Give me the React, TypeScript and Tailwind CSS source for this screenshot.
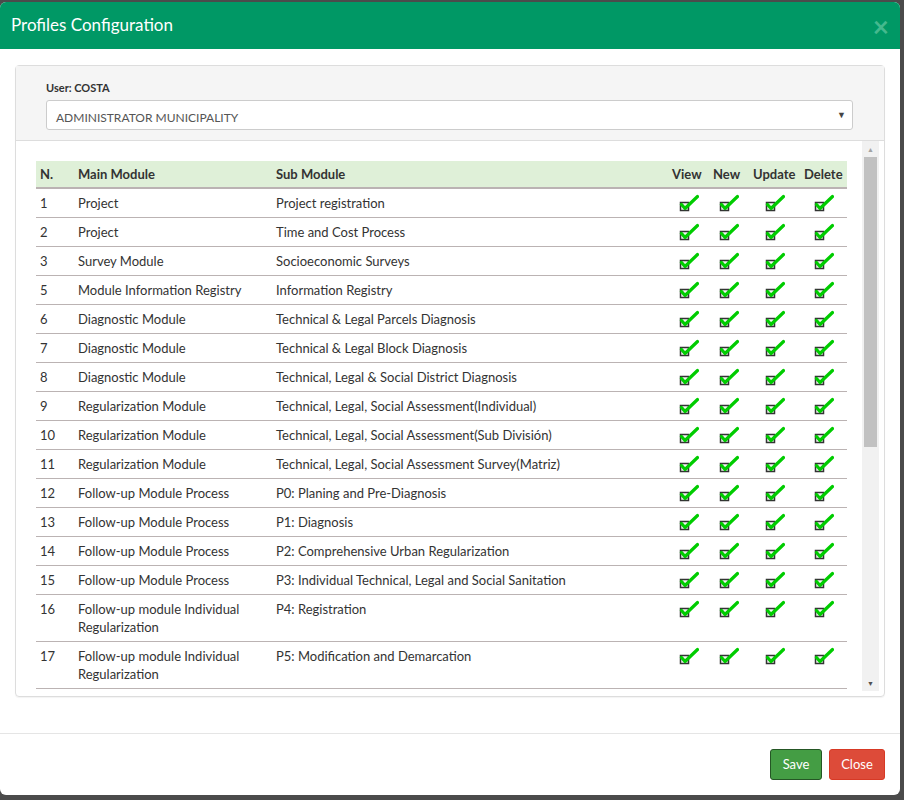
import React from 'react';

const rows = [
  { n: '1', main: 'Project', sub: 'Project registration' },
  { n: '2', main: 'Project', sub: 'Time and Cost Process' },
  { n: '3', main: 'Survey Module', sub: 'Socioeconomic Surveys' },
  { n: '5', main: 'Module Information Registry', sub: 'Information Registry' },
  { n: '6', main: 'Diagnostic Module', sub: 'Technical & Legal Parcels Diagnosis' },
  { n: '7', main: 'Diagnostic Module', sub: 'Technical & Legal Block Diagnosis' },
  { n: '8', main: 'Diagnostic Module', sub: 'Technical, Legal & Social District Diagnosis' },
  { n: '9', main: 'Regularization Module', sub: 'Technical, Legal, Social Assessment(Individual)' },
  { n: '10', main: 'Regularization Module', sub: 'Technical, Legal, Social Assessment(Sub División)' },
  { n: '11', main: 'Regularization Module', sub: 'Technical, Legal, Social Assessment Survey(Matriz)' },
  { n: '12', main: 'Follow-up Module Process', sub: 'P0: Planing and Pre-Diagnosis' },
  { n: '13', main: 'Follow-up Module Process', sub: 'P1: Diagnosis' },
  { n: '14', main: 'Follow-up Module Process', sub: 'P2: Comprehensive Urban Regularization' },
  { n: '15', main: 'Follow-up Module Process', sub: 'P3: Individual Technical, Legal and Social Sanitation' },
  { n: '16', main: 'Follow-up module Individual Regularization', sub: 'P4: Registration' },
  { n: '17', main: 'Follow-up module Individual Regularization', sub: 'P5: Modification and Demarcation' },
];

// checkbox with green tick, like the old "checked" gif
function Tick() {
  return (
    <svg width="20" height="18" viewBox="0 0 20 18" className="block mx-auto">
      <rect x="1.5" y="8.5" width="8" height="8" fill="#f4f4f4" stroke="#333" strokeWidth="1.5" />
      <path d="M2.5 10.5 L6 14.5 L18.5 2.5" fill="none" stroke="#0c0" strokeWidth="3.2" strokeLinecap="round" strokeLinejoin="round" />
    </svg>
  );
}

export default function App() {
  return (
    <div className="w-[904px] h-[800px] bg-[#4b4b4b] pt-[2px] pr-[4px] font-['Lato','Liberation_Sans',sans-serif] text-[#333]">
      <div className="w-[900px] h-[793px] bg-white rounded-[6px] overflow-hidden flex flex-col">
        {/* header */}
        <div className="h-[47px] bg-[#009865] flex items-center justify-between pl-[11px] pr-[11px] pb-[3px]">
          <h4 className="text-white text-[17px] leading-none">Profiles Configuration</h4>
          <span className="text-[#45b98e] text-[28px] font-bold leading-none pt-[3px]">×</span>
        </div>

        {/* body */}
        <div className="flex-1 px-[15px] pt-[16px]">
          <div className="border border-[#ddd] rounded-[4px] shadow-[0_1px_1px_rgba(0,0,0,0.05)]">
            <div className="bg-[#f5f5f5] border-b border-[#ddd] h-[75px] pl-[30px] pr-[31px] pt-[14px]">
              <label className="block text-[11px] font-bold leading-[16px]">User: COSTA</label>
              <div className="mt-[4px] h-[30px] bg-white border border-[#ccc] rounded-[3px] flex items-center justify-between pl-[9px] pr-[6px]">
                <span className="text-[12px] text-[#555] pt-[5px]">ADMINISTRATOR MUNICIPALITY</span>
                <span className="text-[9px] text-[#444]">▼</span>
              </div>
            </div>

            <div className="flex h-[550px]">
              <div className="flex-1 overflow-hidden pl-[20px] pr-[15px] pt-[20px]">
                <table className="w-full table-fixed border-collapse text-[13px]">
                  <colgroup>
                    <col className="w-[38px]" />
                    <col className="w-[198px]" />
                    <col />
                    <col className="w-[41px]" />
                    <col className="w-[40px]" />
                    <col className="w-[51px]" />
                    <col className="w-[47px]" />
                  </colgroup>
                  <thead>
                    <tr className="bg-[#dff0d8] border-b-2 border-[#bbb3b3]">
                      {['N.', 'Main Module', 'Sub Module', 'View', 'New', 'Update', 'Delete'].map((h) => (
                        <th key={h} className="text-left font-bold px-[4px] py-[4px] leading-[18px] whitespace-nowrap">{h}</th>
                      ))}
                    </tr>
                  </thead>
                  <tbody>
                    {rows.map((r) => (
                      <tr key={r.n} className="border-b border-[#bbb3b3] align-top">
                        <td className="px-[4px] py-[5px] leading-[18px]">{r.n}</td>
                        <td className="px-[4px] py-[5px] leading-[18px]">{r.main}</td>
                        <td className="px-[4px] py-[5px] leading-[18px] whitespace-nowrap">{r.sub}</td>
                        {[0, 1, 2, 3].map((i) => (
                          <td key={i} className="py-[5px] leading-[18px]"><Tick /></td>
                        ))}
                      </tr>
                    ))}
                  </tbody>
                </table>
              </div>
              {/* scrollbar */}
              <div className="w-[17px] bg-[#f1f1f1] flex flex-col items-center mr-[5px]">
                <div className="h-[16px] flex items-center justify-center text-[7px] text-[#a3a3a3]">▲</div>
                <div className="w-[13px] h-[290px] bg-[#c1c1c1]" />
                <div className="flex-1" />
                <div className="h-[16px] flex items-center justify-center text-[7px] text-[#505050]">▼</div>
              </div>
            </div>
            <div className="h-[5px]" />
          </div>
        </div>

        {/* footer */}
        <div className="border-t border-[#e5e5e5] h-[62px] flex items-start justify-end gap-[7px] pt-[15px] pr-[15px]">
          <button className="h-[31px] w-[52px] rounded-[3px] bg-[#449d44] border border-[#255625] text-white text-[13px]">Save</button>
          <button className="h-[31px] w-[56px] rounded-[3px] bg-[#dd4b39] border border-[#d73925] text-white text-[13px]">Close</button>
        </div>
      </div>
    </div>
  );
}
